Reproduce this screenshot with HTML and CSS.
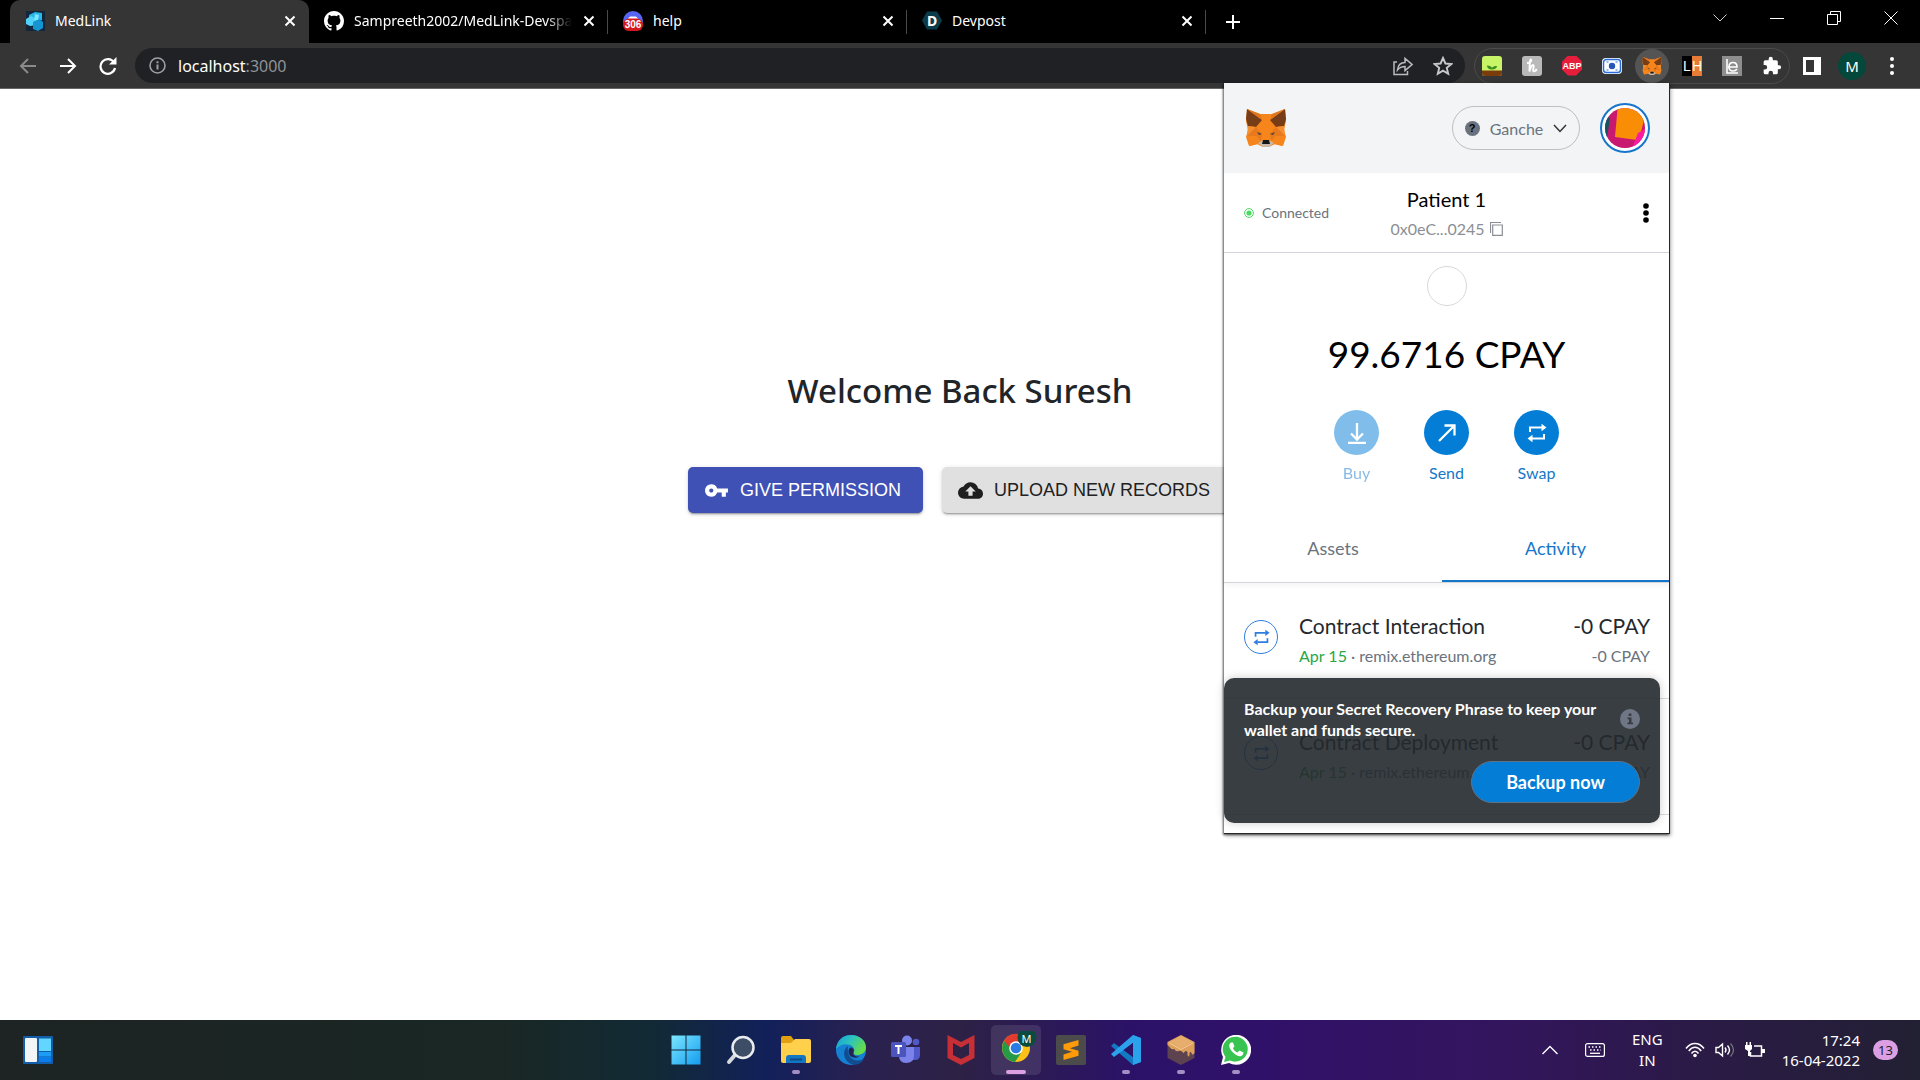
FILE: index.html
```html
<!DOCTYPE html>
<html lang="en">
<head>
<meta charset="utf-8">
<title>MedLink</title>
<link rel="stylesheet" href="styles.css">
</head>
<body>
<svg class="defs" aria-hidden="true">
  <defs>
    <symbol id="close" viewBox="0 0 12 12"><path d="M1.500 1.500l9 9M10.500 1.500l-9 9" stroke="#fff" stroke-width="2" fill="none"/></symbol>
    <symbol id="swap" viewBox="0 0 20 20"><path d="M3 9V4.500h12M17 11v4.500H5" stroke="currentColor" stroke-width="2" fill="none"/><path d="M14.500.8L19.500 4.500l-5 3.700zM5.500 11.800L.5 15.500l5 3.700z" fill="currentColor"/></symbol>
    <symbol id="fox" viewBox="0 0 42 40">
      <path d="M2 1l13 5h12l13-5 1 12-2 9 2 7-3 9-8-2-6 3h-6l-6-3-8 2-3-9 2-7-2-9z" fill="#f6851b"/>
      <path d="M2 1l15 11-6 7-8-1-2-7zM40 1L25 12l6 7 8-1 2-7z" fill="#763d16"/>
      <path d="M2 1l13 5 2 6zM40 1L27 6l-2 6z" fill="#e2761b"/>
      <path d="M3 18l8 1-9 9zM39 18l-8 1 9 9z" fill="#f58f2f"/>
      <path d="M11 19l6 7-1 7-4-4-10-1zM31 19l-6 7 1 7 4-4 10-1z" fill="#e8791c"/>
      <path d="M2 28h10l1 8-8 2zM40 28H30l-1 8 8 2z" fill="#f6851b"/>
      <path d="M12 24l5 2-3 1zM30 24l-5 2 3 1z" fill="#4a4246"/>
      <path d="M13 35l5-3h6l5 3-5 4h-6z" fill="#c9b8aa"/>
      <path d="M18 32h6l1 4h-8z" fill="#161616"/>
    </symbol>
  </defs>
</svg>

<header class="browser">
  <div class="tabstrip">
    <nav class="tabs" aria-label="Tabs">
      <div class="tab active">
        <svg class="favicon" viewBox="0 0 20 20"><path d="M1 0h19v20H1z" fill="#14263c"/><path d="M10 1l7 1v7l-7 2-6-2 0-5z" fill="#27b5ea"/><path d="M1 8l5-3 5 3v6l-6 1-4-2z" fill="#4fd3fb"/><path d="M8 11l6-3 4 3v6l-5 3-5-2z" fill="#1495d2"/><path d="M10 3l4 1-1 5-4 0z" fill="#7be6ff"/></svg>
        <span class="tab-title">MedLink</span>
        <button class="tab-close" aria-label="Close tab"><svg width="12" height="12"><use href="#close"/></svg></button>
      </div>
      <div class="tab">
        <svg class="favicon" viewBox="0 0 16 16"><path fill="#fff" d="M8 0C3.580 0 0 3.580 0 8c0 3.540 2.290 6.530 5.470 7.590.4.070.55-.17.55-.38 0-.19-.01-.82-.01-1.490-2.010.37-2.530-.49-2.690-.94-.09-.23-.48-.94-.82-1.130-.28-.15-.68-.52-.01-.53.63-.01 1.080.58 1.230.82.72 1.210 1.870.87 2.330.66.070-.52.280-.87.510-1.070-1.780-.2-3.640-.89-3.640-3.950 0-.87.310-1.590.82-2.150-.08-.2-.36-1.020.08-2.120 0 0 .67-.21 2.200.82.64-.18 1.320-.27 2-.27s1.360.09 2 .27c1.530-1.040 2.200-.82 2.200-.82.44 1.100.16 1.920.08 2.120.51.56.82 1.270.82 2.150 0 3.070-1.870 3.750-3.650 3.950.29.25.54.73.54 1.480 0 1.070-.01 1.930-.01 2.200 0 .21.15.46.55.38A8.010 8.010 0 0016 8c0-4.420-3.580-8-8-8z"/></svg>
        <span class="tab-title fade">Sampreeth2002/MedLink-Devspace</span>
        <button class="tab-close" aria-label="Close tab"><svg width="12" height="12"><use href="#close"/></svg></button>
      </div>
      <div class="tab">
        <span class="favicon count-icon"><svg width="20" height="20" viewBox="0 0 20 20"><circle cx="10" cy="10" r="10" fill="#5865f2"/><path d="M5 8q1-3 3-2.500h4q2-.5 3 2.500z" fill="#fff"/><rect y="7.500" width="20" height="12.500" rx="6" fill="#d3191f"/></svg><span class="count">306</span></span>
        <span class="tab-title">help</span>
        <button class="tab-close" aria-label="Close tab"><svg width="12" height="12"><use href="#close"/></svg></button>
      </div>
      <div class="tab">
        <span class="favicon devpost">D</span>
        <span class="tab-title">Devpost</span>
        <button class="tab-close" aria-label="Close tab"><svg width="12" height="12"><use href="#close"/></svg></button>
      </div>
      <button class="new-tab" aria-label="New tab"><svg width="16" height="16" viewBox="0 0 16 16"><path d="M8 1v14M1 8h14" stroke="#fff" stroke-width="2"/></svg></button>
    </nav>
    <div class="window-buttons">
      <button aria-label="Search tabs"><svg width="14" height="14" viewBox="0 0 14 14"><path d="M.5 3.500L7 10l6.500-6.500" fill="none" stroke="#ccc"/></svg></button>
      <button aria-label="Minimize"><svg width="14" height="14" viewBox="0 0 14 14"><path d="M0 7.500h14" stroke="#fff"/></svg></button>
      <button aria-label="Restore"><svg width="14" height="14" viewBox="0 0 14 14"><path d="M.5 3.500h10v10H.5zM3.500 3V.5h10v10H11" fill="none" stroke="#fff"/></svg></button>
      <button aria-label="Close"><svg width="14" height="14" viewBox="0 0 14 14"><path d="M.5.5l13 13M13.500.5l-13 13" stroke="#fff"/></svg></button>
    </div>
  </div>
  <div class="toolbar">
    <button class="nav-button" aria-label="Back"><svg width="18" height="18" viewBox="0 0 18 18"><path d="M17 9H2M9 2L2 9l7 7" fill="none" stroke="#8a8a8a" stroke-width="2"/></svg></button>
    <button class="nav-button" aria-label="Forward"><svg width="18" height="18" viewBox="0 0 18 18"><path d="M1 9h15M9 2l7 7-7 7" fill="none" stroke="#fff" stroke-width="2"/></svg></button>
    <button class="nav-button" aria-label="Reload"><svg width="18" height="18" viewBox="0 0 18 18"><path d="M15 5.500A7.300 7.300 0 1 0 16 11" fill="none" stroke="#fff" stroke-width="2.200"/><path d="M17.500 0v7.500H10z" fill="#fff"/></svg></button>
    <div class="address">
      <svg width="17" height="17" viewBox="0 0 17 17"><circle cx="8.500" cy="8.500" r="7.500" fill="none" stroke="#9aa0a6" stroke-width="1.600"/><path d="M8.500 7.500v5M8.500 4.300v1.900" stroke="#9aa0a6" stroke-width="2"/></svg>
      <a class="url" href="#">localhost<span class="port">:3000</span></a>
      <button class="share" aria-label="Share"><svg width="20" height="20" viewBox="0 0 20 20"><path d="M4 6H1v12.500h13.500V15M4.500 14c.5-5 3.500-7.500 7.500-7.500V2.500l7 6-7 6v-4c-3.500 0-5.500 1-7.500 3.500z" fill="none" stroke="#b8bbbf" stroke-width="1.500"/></svg></button>
      <button class="star" aria-label="Bookmark"><svg width="20" height="20" viewBox="0 0 20 20"><path d="M10 2l2.400 5.500 6 .5-4.600 3.900 1.400 5.900L10 14.600l-5.200 3.200 1.400-5.900L1.600 8l6-.5z" fill="none" stroke="#c6c8cb" stroke-width="1.900"/></svg></button>
    </div>
    <div class="extensions">
      <button aria-label="Forest"><svg width="20" height="20" viewBox="0 0 20 20"><rect width="20" height="20" rx="3" fill="#c8f568"/><path d="M0 14.500h20V17q0 3-3 3H3q-3 0-3-3z" fill="#7a3c0c"/><path d="M10 13.500C6 13.500 5 11 5 9.500c3 0 4.500 1 5 2.500.5-1.500 2.500-2 5-2 0 2-2 3.500-5 3.500z" fill="#3f8f20"/></svg></button>
      <button aria-label="Honey"><svg width="20" height="20" viewBox="0 0 20 20"><rect width="20" height="20" rx="3" fill="#b9b9b9"/><path d="M5 7c4 0 5-3 4-3.500S7.500 8 7.500 15.500c1-5 3-7 4-6.300s-.8 4-.3 5.500 2.500.5 3.500-1.700" fill="none" stroke="#fff" stroke-width="1.900"/></svg></button>
      <button class="abp" aria-label="Adblock Plus"><span>ABP</span></button>
      <button aria-label="Screen capture"><svg width="20" height="20" viewBox="0 0 20 20"><rect y="2" width="20" height="16" rx="4" fill="#fff"/><rect x="1.500" y="3.500" width="17" height="13" rx="3" fill="none" stroke="#2a6cdc" stroke-width="1.500"/><path d="M4.500 6h2M13.500 6h2M4.500 14h2M13.500 14h2" stroke="#2a6cdc"/><circle cx="10" cy="10" r="3.200" fill="#2656b8"/></svg></button>
      <button class="current" aria-label="MetaMask"><svg width="20" height="20"><use href="#fox"/></svg></button>
      <button class="lh" aria-label="LH"><span class="l">L</span><span class="h">H</span></button>
      <button aria-label="Reader"><svg width="20" height="20" viewBox="0 0 20 20"><rect width="20" height="20" fill="#8e8e8e"/><path d="M5 3v14h11M6 11h9c0-6-8-6-8 0 0 5 6 5 8 2" fill="none" stroke="#fff" stroke-width="1.600"/></svg></button>
      <button aria-label="Extensions"><svg width="20" height="20" viewBox="0 0 24 24"><path d="M20.500 11H19V7a2 2 0 00-2-2h-4V3.500a2.500 2.500 0 00-5 0V5H4a2 2 0 00-2 2v3.800h1.500a2.700 2.700 0 010 5.400H2V20a2 2 0 002 2h3.800v-1.500a2.700 2.700 0 015.400 0V22H17a2 2 0 002-2v-4h1.500a2.500 2.500 0 000-5z" fill="#fff"/></svg></button>
    </div>
    <div class="toolbar-end">
      <button aria-label="Side panel"><svg width="18" height="18" viewBox="0 0 18 18"><path d="M1.500 1.500h15v15h-15z" fill="none" stroke="#fff" stroke-width="3"/><path d="M11 2h6v14h-6z" fill="#fff"/></svg></button>
      <button class="profile" aria-label="Profile">M</button>
      <button aria-label="Menu"><svg width="4" height="18" viewBox="0 0 4 18"><circle cx="2" cy="2" r="2" fill="#fff"/><circle cx="2" cy="9" r="2" fill="#fff"/><circle cx="2" cy="16" r="2" fill="#fff"/></svg></button>
    </div>
  </div>
</header>

<main class="page">
  <h1>Welcome Back Suresh</h1>
  <div class="actions">
    <button class="action primary"><svg width="25" height="25" viewBox="0 0 24 24"><path fill="#fff" d="M12.650 10A5.990 5.990 0 007 6c-3.310 0-6 2.690-6 6s2.690 6 6 6a5.990 5.990 0 005.650-4H17v4h4v-4h2v-4H12.650zM7 14c-1.100 0-2-.9-2-2s.9-2 2-2 2 .9 2 2-.9 2-2 2z"/></svg>GIVE PERMISSION</button>
    <button class="action plain"><svg width="25" height="25" viewBox="0 0 24 24"><path fill="#1f1f1f" d="M19.350 10.040A7.490 7.490 0 0012 4C9.110 4 6.600 5.640 5.350 8.040A5.994 5.994 0 000 14c0 3.310 2.690 6 6 6h13c2.760 0 5-2.240 5-5 0-2.640-2.050-4.780-4.650-4.960zM14 13v4h-4v-4H7l5-5 5 5h-3z"/></svg>UPLOAD NEW RECORDS</button>
  </div>
</main>

<section class="wallet" aria-label="MetaMask">
  <div class="wallet-head">
    <svg class="wallet-logo" width="42" height="40"><use href="#fox"/></svg>
    <button class="network"><span class="question">?</span><span>Ganche</span><svg width="14" height="9" viewBox="0 0 14 9"><path d="M1 1l6 6.500L13 1" fill="none" stroke="#333" stroke-width="1.500"/></svg></button>
    <button class="identicon" aria-label="Accounts"><svg width="40" height="40" viewBox="0 0 40 40"><defs><clipPath id="round"><circle cx="20" cy="20" r="20"/></clipPath></defs><g clip-path="url(#round)"><path d="M0 0h40v40H0z" fill="#c8186f"/><path d="M0 8l5 2-3 20-4 0z" fill="#15565c"/><path d="M13-4h30l-7 28-4 8-22-3z" fill="#f98d06"/><path d="M33 25l9-5v20H27z" fill="#fb1ba0"/></g></svg></button>
  </div>
  <div class="account">
    <span class="connected"><svg width="10" height="10" viewBox="0 0 10 10"><circle cx="5" cy="5" r="4.400" fill="#fff" stroke="#4cd964"/><circle cx="5" cy="5" r="2.600" fill="#4cd964"/></svg>Connected</span>
    <button class="account-name"><span class="name">Patient 1</span><span class="hash">0x0eC...0245<svg width="13" height="14" viewBox="0 0 13 14"><path d="M.5 11V.5H11M2.700 3h9.600v10.300H2.700z" fill="none" stroke="#8b8f94" stroke-width="1.200"/></svg></span></button>
    <button class="options" aria-label="Account options"><svg width="6" height="20" viewBox="0 0 6 20"><circle cx="3" cy="3" r="2.800"/><circle cx="3" cy="10" r="2.800"/><circle cx="3" cy="17" r="2.800"/></svg></button>
  </div>
  <div class="overview">
    <span class="token"></span>
    <p class="balance">99.6716 CPAY</p>
    <div class="wallet-actions">
      <button class="dim"><span class="disc"><svg width="20" height="22" viewBox="0 0 20 22"><path d="M10 1v16M4 11.500l6 6 6-6M1 21h18" fill="none" stroke="#fff" stroke-width="2.300"/></svg></span>Buy</button>
      <button><span class="disc"><svg width="20" height="20" viewBox="0 0 20 20"><path d="M2 18L17 3M7.500 2.500h10v10" fill="none" stroke="#fff" stroke-width="2.300"/></svg></span>Send</button>
      <button><span class="disc"><svg width="20" height="20"><use href="#swap"/></svg></span>Swap</button>
    </div>
  </div>
  <div class="wallet-tabs"><button class="assets">Assets</button><button class="selected">Activity</button></div>
  <ul class="activity">
    <li><span class="ring"><svg width="17" height="17"><use href="#swap"/></svg></span>
      <div class="what"><h2>Contract Interaction</h2><p><span class="date">Apr 15</span> · remix.ethereum.org</p></div>
      <div class="amount"><h2>-0 CPAY</h2><p>-0 CPAY</p></div></li>
    <li><span class="ring"><svg width="17" height="17"><use href="#swap"/></svg></span>
      <div class="what"><h2>Contract Deployment</h2><p><span class="date">Apr 15</span> · remix.ethereum.org</p></div>
      <div class="amount"><h2>-0 CPAY</h2><p>-0 CPAY</p></div></li>
  </ul>
  <div class="backup">
    <div class="backup-text"><p>Backup your Secret Recovery Phrase to keep your wallet and funds secure.</p><svg width="20" height="20" viewBox="0 0 20 20"><circle cx="10" cy="10" r="10" fill="#6f7786"/><path d="M8.700 4.500h2.700v2.500H8.700zM7.500 8.500h4v5H13v1.800H7.500v-1.800H9v-3.200H7.500z" fill="#393d42"/></svg></div>
    <button class="backup-now">Backup now</button>
  </div>
</section>

<footer class="taskbar">
  <button class="widgets" aria-label="Widgets"><svg width="30" height="28" viewBox="0 0 30 28"><rect width="30" height="28" rx="1" fill="#125ea8"/><rect x="2" y="2" width="12" height="24" rx="1" fill="#f2f4f6"/><path d="M16 2.500h12V15H16z" fill="#62d6ff"/><path d="M16 16h12v4.500H16z" fill="#1b9df5"/><path d="M16 21h12v5H16z" fill="#0b7ce8"/></svg></button>
  <div class="apps">
    <button aria-label="Start"><svg width="30" height="30" viewBox="0 0 30 30"><defs><linearGradient id="win" x1="0" y1="0" x2="1" y2="1"><stop offset="0" stop-color="#7de7fd"/><stop offset="1" stop-color="#149cf0"/></linearGradient></defs><path d="M.5.500h14v14h-14zM15.500.500h14v14h-14zM.5 15.500h14v14h-14zM15.500 15.500h14v14h-14z" fill="url(#win)"/></svg></button>
    <button aria-label="Search"><svg width="30" height="30" viewBox="0 0 30 30"><path d="M9 20l-6 7" stroke="#d5d8dc" stroke-width="4" stroke-linecap="round"/><circle cx="17" cy="12.500" r="10.500" fill="#3d4d66" stroke="#e9ecef" stroke-width="2.500"/></svg></button>
    <button class="running" aria-label="File Explorer"><svg width="30" height="30" viewBox="0 0 30 30"><path d="M0 3q0-2 2-2h8l3 4v6H0z" fill="#e0a010"/><path d="M0 8h10l4-4h14q2 0 2 2v20q0 2-2 2H2q-2 0-2-2z" fill="#ffd04c"/><path d="M5 28v-5q0-3 3-3h14q3 0 3 3v5z" fill="#1577c4"/><path d="M9 24.500h12" stroke="#0b4c86" stroke-width="2"/></svg></button>
    <button aria-label="Edge"><svg width="30" height="30" viewBox="0 0 30 30"><defs><linearGradient id="edge" x1="0" y1="0" x2="1" y2=".5"><stop offset="0" stop-color="#189cdc"/><stop offset=".5" stop-color="#2cc3bd"/><stop offset="1" stop-color="#65dc49"/></linearGradient></defs><circle cx="15" cy="15" r="15" fill="#1581d2"/><path d="M0 14C1 5 7 0 15 0c9 0 15 6 15 12 0 6-5 8-9 8-3 0-4-1-3-3 3-7-11-12-18-3z" fill="url(#edge)"/><path d="M12 11c-6 4-5 14 3 18 6 2 11-1 13-5-8 4-18 0-16-13z" fill="#124d91"/><path d="M17.500 17c-1 3 2 5 6 4.500-5 3-11 0-11-5 0-2 1-4 3-4 2 1 3 2.500 2 4.500z" fill="#252354"/></svg></button>
    <button aria-label="Teams"><svg width="30" height="30" viewBox="0 0 30 30"><circle cx="16" cy="5.500" r="5" fill="#7b83eb"/><circle cx="25" cy="7" r="3.300" fill="#5059c9"/><path d="M20 12h9v8q0 5-5 5h-4z" fill="#5059c9"/><path d="M8 12h15v9q0 7-8 7-7 0-7-8z" fill="#7b83eb"/><rect x="0" y="7" width="15" height="15" rx="1.500" fill="#4b53bc"/><path d="M4 11h7M7.500 11v8" stroke="#fff" stroke-width="2"/></svg></button>
    <button aria-label="McAfee"><svg width="30" height="30" viewBox="0 0 30 30"><path d="M1.500 0L15 7l13.500-7v23L15 30 1.500 23zM7 8v12l8 4 8-4V8l-8 4.500z" fill="#c62f35" fill-rule="evenodd"/></svg></button>
    <button class="running focused" aria-label="Chrome"><svg width="36" height="32" viewBox="0 0 36 32"><circle cx="15" cy="17" r="14" fill="#fbc116"/><path d="M3 10a14 14 0 0124-1l2 3-14 1-6 8z" fill="#e33b2e"/><path d="M3 10A14 14 0 0014 31l6-9-5 1z" fill="#259b48"/><circle cx="15" cy="17" r="6.800" fill="#fff"/><circle cx="15" cy="17" r="5.300" fill="#2a7be4"/><circle cx="26" cy="6.500" r="9.500" fill="#0a4d40"/></svg><span class="letter">M</span></button>
    <button aria-label="Sublime Text"><svg width="30" height="30" viewBox="0 0 30 30"><rect width="30" height="30" rx="2" fill="#4b4b4b"/><path d="M22.500 5v5.500L14 13.200l8.500 2.600v5L7.500 25v-5.500l8.500-2.700-8.500-2.600v-5z" fill="#ff9a09"/></svg></button>
    <button class="running" aria-label="Visual Studio Code"><svg width="30" height="30" viewBox="0 0 30 30"><path d="M22 0l8 3v24l-8 3L0 11l3-3 19 14z" fill="#1479c4"/><path d="M22 8L3 22l-3-3L22 0l8 3v24l-8 3z" fill="#2ba2ec"/><path d="M22 8v14l-9-7z" fill="#2b1366"/></svg></button>
    <button class="running" aria-label="Ganache"><svg width="30" height="30" viewBox="0 0 30 30"><path d="M15 0l13.500 7v16L15 30 1.500 23V7z" fill="#5d4350"/><path d="M15 0l13.500 7v11q-2 3-3 0-1-2-2 0v2q-1 3-2 0v-3q-2-2-3 0-1 2-2 0-2-2-4-1-3 1-4-2-3 1-4-1l-3-3V7z" fill="#dd9f5c"/><path d="M15 1l12 6-12 6.500L3 7z" fill="#e6ad6c"/><path d="M3 8l12 6.500L27 8" fill="none" stroke="#f3cd94" stroke-width="1"/></svg></button>
    <button class="running" aria-label="WhatsApp"><svg width="30" height="30" viewBox="0 0 30 30"><path d="M0 30l2-8A15 15 0 1 1 8 28z" fill="#fff"/><path d="M3 27l1.500-5A12.500 12.500 0 1 1 9 25.500z" fill="#39c451"/><path d="M10 7.500c-3 2-2 6 2 10s8 5 10 2l.5-2-4-2-2 2c-2-.5-4-2.500-4.500-4.500l1.500-1.500-1.500-4z" fill="#fff"/></svg></button>
  </div>
  <div class="tray">
    <button class="tray-up" aria-label="Hidden icons"><svg width="16" height="10" viewBox="0 0 16 10"><path d="M.5 9L8 1.500 15.500 9" fill="none" stroke="#fff" stroke-width="1.400"/></svg></button>
    <button class="keyboard" aria-label="Touch keyboard"><svg width="20" height="14" viewBox="0 0 20 14"><rect x=".6" y=".6" width="18.800" height="12.800" rx="2" fill="none" stroke="#fff" stroke-width="1.200"/><path d="M3.500 4h13M5 7h11" stroke="#fff" stroke-width="1.500" stroke-dasharray="1.500 2"/><path d="M5 10.300h10" stroke="#fff" stroke-width="1.300"/></svg></button>
    <button class="language">ENG<br>IN</button>
    <button class="status" aria-label="Network, sound and battery">
      <svg width="20" height="16" viewBox="0 0 20 16"><path d="M1 6.500C6-.2 14-.2 19 6.500M3.800 9C7.500 4 12.500 4 16.200 9M6.500 11.500C8.500 8.500 11.500 8.500 13.500 11.500" fill="none" stroke="#fff" stroke-width="1.500"/><circle cx="10" cy="13.500" r="1.800" fill="#fff"/></svg>
      <svg width="20" height="16" viewBox="0 0 20 16"><path d="M1 5.500h2.500L7.500 2v12L3.500 10.500H1zM10 5.500q2 2.500 0 5M12.500 3.500q4 4.500 0 9" fill="none" stroke="#fff" stroke-width="1.400"/><path d="M15.500 1.500q6 6.500 0 13" fill="none" stroke="#777" stroke-width="1.200"/></svg>
      <svg width="20" height="16" viewBox="0 0 20 16"><path d="M9 4h7.500v10H5.500v-4" fill="none" stroke="#fff" stroke-width="1.500"/><path d="M17 7h3v4h-3zM0 3h7v4L5 9v5H3V9L0 7zM1 0h1.500v3H1zM4.500 0H6v3H4.500z" fill="#fff"/></svg>
    </button>
    <button class="clock">17:24<br>16-04-2022</button>
    <button class="notifications" aria-label="Notifications">13</button>
  </div>
</footer>
</body>
</html>
```

FILE: styles.css
```css
* { box-sizing: border-box; }
html, body { height: 100%; }
body {
  margin: 0;
  display: flex;
  flex-direction: column;
  position: relative;
  min-height: 100vh;
  overflow: hidden;
  background: #fff;
  font-family: "Noto Sans", sans-serif;
}
.defs { position: absolute; width: 0; height: 0; }
button {
  display: flex;
  align-items: center;
  justify-content: center;
  margin: 0;
  padding: 0;
  border: 0;
  background: none;
  color: inherit;
  font: inherit;
}
svg { display: block; flex: none; }
h1, h2, p, ul { margin: 0; padding: 0; }

/* Tab strip */
.tabstrip { display: flex; justify-content: space-between; height: 43px; background: #000; }
.tabs { display: flex; padding-left: 10px; }
.tab {
  display: flex;
  align-items: center;
  width: 299px;
  padding: 0 11px 2px 15px;
  color: #fff;
  font-size: 14px;
  position: relative;
}
.tab:not(.active)::after { content: ""; position: absolute; right: 0; top: 10px; width: 1px; height: 24px; background: #4a4a4a; }
.tab.active { background: #353535; border-radius: 10px 10px 0 0; }
.favicon { width: 20px; height: 20px; flex: none; }
.tab-title { flex: 1; margin: 0 9px 0 10px; overflow: hidden; white-space: nowrap; }
.fade { -webkit-mask-image: linear-gradient(90deg, #000 88%, transparent); mask-image: linear-gradient(90deg, #000 88%, transparent); }
.tab-close { width: 16px; height: 16px; }
.count-icon { position: relative; }
.count { position: absolute; inset: 8px 0 0; text-align: center; color: #fff; font: bold 10px/12px "Liberation Sans", sans-serif; }
.devpost {
  background: #0b3c4c;
  color: #fff;
  clip-path: polygon(25% 5%, 75% 5%, 100% 50%, 75% 95%, 25% 95%, 0 50%);
  font: bold 14px/20px "Noto Sans", sans-serif;
  text-align: center;
}
.new-tab { width: 48px; height: 43px; margin-left: 3px; }
.window-buttons { display: flex; height: 36px; padding-right: 1px; }
.window-buttons button { width: 57px; }

/* Toolbar */
.toolbar { display: flex; align-items: center; height: 46px; padding: 0 10px 0 8px; background: #353535; border-bottom: 1px solid #666; }
.nav-button { width: 40px; height: 40px; }
.address { display: flex; align-items: center; flex: 1; height: 35px; margin-left: 7px; padding: 0 12px 0 14px; border-radius: 18px; background: #202124; }
.url { flex: 1; margin-left: 12px; color: #fff; text-decoration: none; font-size: 16px; }
.port { color: #8f9297; }
.star { margin-left: 20px; }
.extensions { display: flex; gap: 6px; height: 36px; margin-left: 9px; border: 1px solid #4b4b4b; border-radius: 18px; }
.extensions button { width: 34px; }
.extensions .current { background: #545454; border-radius: 50%; }
.abp span {
  width: 20px;
  color: #fff;
  background: #e71d3c;
  clip-path: polygon(30% 0, 70% 0, 100% 30%, 100% 70%, 70% 100%, 30% 100%, 0 70%, 0 30%);
  font: bold 9px/20px "Liberation Sans", sans-serif;
}
.lh span { width: 10px; height: 20px; color: #fff; font: 14px/20px "Liberation Sans", sans-serif; }
.lh .l { background: #000; }
.lh .h { background: #e87b35; }
.toolbar-end { display: flex; align-items: center; margin-left: 4px; }
.toolbar-end button { width: 36px; height: 36px; }
.toolbar-end .profile { width: 28px; height: 28px; margin: 0 8px; border-radius: 50%; background: #04483b; color: #fff; font-size: 15px; }

/* Page */
.page { flex: 1; display: flex; flex-direction: column; align-items: center; padding-top: 278px; }
h1 { color: #212529; font-size: 33px; line-height: 48px; font-weight: 500; }
.actions { display: flex; gap: 19px; margin-top: 52px; }
.action {
  gap: 11px;
  height: 46px;
  padding: 0 22px 0 16px;
  border-radius: 5px;
  box-shadow: 0 3px 1px -2px rgba(0,0,0,.2), 0 2px 2px rgba(0,0,0,.14), 0 1px 5px rgba(0,0,0,.12);
  font: 18px/32px "Liberation Sans", sans-serif;
}
.primary { background: #3f51b5; color: #fff; }
.plain { background: #e0e0e0; color: #212121; }

/* Wallet popup */
.wallet {
  position: absolute;
  top: 83px;
  right: 250px;
  width: 446px;
  background: #fff;
  border: solid #24272a;
  border-width: 0 1px 1px 0;
  box-shadow: -1px 1px 2px rgba(0,0,0,.6), 1px 2px 4px rgba(0,0,0,.3);
  color: #24292e;
  font-family: Lato, sans-serif;
}
.wallet-head { display: flex; align-items: center; height: 90px; padding: 0 19px 0 21px; background: #f2f4f6; }
.network { width: 128px; height: 44px; margin-left: auto; gap: 10px; border: 1px solid #bbc0c5; border-radius: 22px; color: #6a737d; font-size: 16px; }
.question { width: 15px; height: 15px; border-radius: 50%; background: #6a737d; color: #000; font: bold 11px/15px "Liberation Sans", sans-serif; }
.identicon { width: 50px; height: 50px; margin-left: 20px; border: 2px solid #1676c9; border-radius: 50%; background: #fff; }
.account { display: grid; grid-template-columns: 1fr 1fr 1fr; align-items: center; height: 80px; padding: 0 20px; border-bottom: 1px solid #d2d5d9; }
.connected { display: flex; align-items: center; gap: 8px; color: #6a737d; font-size: 14px; }
.account-name { flex-direction: column; padding-top: 3px; }
.name { color: #000; font-size: 20px; line-height: 30px; }
.hash { display: flex; align-items: center; gap: 5px; color: #8b8f94; font-size: 16px; line-height: 30px; }
.options { justify-self: end; }
.overview { display: flex; flex-direction: column; align-items: center; height: 262px; padding-top: 13px; }
.token { width: 40px; height: 40px; border: 1px solid #d6d9dc; border-radius: 50%; }
.balance { margin-top: 24px; color: #000; font-size: 37px; line-height: 48px; }
.wallet-actions { display: flex; margin-top: 32px; }
.wallet-actions button { flex-direction: column; width: 90px; gap: 7px; color: #1676c9; font-size: 16px; line-height: 22px; }
.disc { display: flex; align-items: center; justify-content: center; width: 45px; height: 45px; border-radius: 50%; background: #037dd6; color: #fff; }
.wallet-actions .dim { opacity: .5; }
.wallet-tabs { display: flex; height: 68px; border-bottom: 1px solid #d2d5d9; box-shadow: 0 3px 4px rgba(0,0,0,.04); }
.wallet-tabs button { flex: 25; border-bottom: 2px solid transparent; color: #6a737d; font-size: 18px; }
.wallet-tabs .assets { flex: 24; }
.wallet-tabs .selected { color: #1676c9; border-color: #1676c9; }
.activity { list-style: none; height: 250px; overflow: hidden; }
.activity li { display: flex; align-items: flex-start; height: 116px; padding: 29px 19px 0 20px; border-bottom: 1px solid #d6d9dc; }
.ring { display: flex; align-items: center; justify-content: center; width: 34px; height: 34px; margin: 8px 21px 0 0; border: 1px solid #2f7de0; border-radius: 50%; color: #2f7de0; }
.activity h2 { font-size: 21px; line-height: 28px; font-weight: 400; }
.activity p { color: #6a737d; font-size: 16px; line-height: 32px; }
.activity .date { color: #28a745; }
.amount { margin-left: auto; text-align: right; }
.backup {
  position: absolute;
  left: 0;
  right: 9px;
  bottom: 10px;
  height: 145px;
  padding: 20px;
  border-radius: 10px;
  background: rgba(36,41,46,.9);
  box-shadow: 0 0 10px rgba(0,0,0,.2);
  color: #fff;
}
.backup-text { display: flex; align-items: center; justify-content: space-between; font-weight: 700; font-size: 16px; line-height: 21px; }
.backup-text p { width: 368px; }
.backup-now { width: 169px; height: 42px; margin: 21px 0 0 auto; border: 1px solid #5f7286; border-radius: 21px; background: #037dd6; font-weight: 700; font-size: 18px; }

/* Taskbar */
.taskbar {
  display: grid;
  grid-template-columns: 1fr auto 1fr;
  align-items: center;
  height: 60px;
  padding: 0 22px 0 23px;
  background: linear-gradient(90deg, #1d2423 0%, #1a2724 26%, #112a35 34%, #12205a 40%, #2a2150 45%, #2d2145 50%, #2b1268 59%, #30116a 65%, #33155e 78%, #2b1a47 88%, #222033 100%);
  color: #fff;
}
.widgets { justify-self: start; }
.apps { display: flex; gap: 5px; }
.apps button { position: relative; width: 50px; height: 50px; }
.running::after { content: ""; position: absolute; bottom: 1px; left: 21px; width: 8px; height: 4px; border-radius: 2px; background: #a48fc5; }
.focused { border-radius: 5px; background: rgba(255,255,255,.1); }
.focused svg { margin: -6px -6px 0 0; }
.focused::after { left: 15px; width: 20px; background: #dc9fe4; }
.letter { position: absolute; top: 4px; left: 26px; width: 20px; font: 11px/20px "Noto Sans", sans-serif; }
.tray { display: flex; align-items: center; justify-content: flex-end; font-size: 15px; line-height: 20px; }
.keyboard { margin-left: 27px; }
.language { margin-left: 27px; line-height: 21px; }
.status { gap: 10px; margin-left: 22px; }
.clock { justify-content: flex-end; margin-left: 17px; text-align: right; }
.notifications { width: 25px; height: 20px; margin-left: 13px; border-radius: 10px; background: #dc9fe4; color: #222; font-size: 13px; }
```
